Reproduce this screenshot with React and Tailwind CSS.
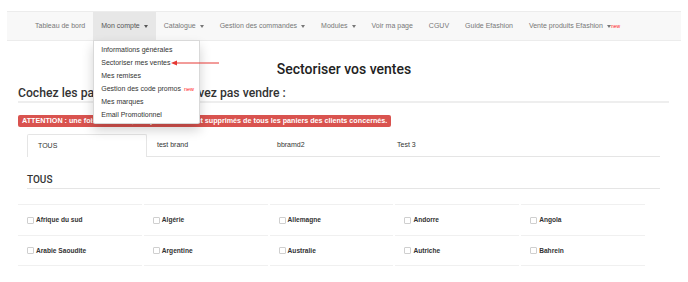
import React from 'react';

const navItems = [
  { label: 'Tableau de bord' },
  { label: 'Mon compte', caret: true, active: true },
  { label: 'Catalogue', caret: true },
  { label: 'Gestion des commandes', caret: true },
  { label: 'Modules', caret: true },
  { label: 'Voir ma page' },
  { label: 'CGUV' },
  { label: 'Guide Efashion' },
  { label: 'Vente produits Efashion', caret: true, isNew: true },
];

const menu = [
  'Informations générales',
  'Sectoriser mes ventes',
  'Mes remises',
  'Gestion des code promos',
  'Mes marques',
  'Email Promotionnel',
];

const tabs = ['TOUS', 'test brand', 'bbramd2', 'Test 3'];

const countries = [
  'Afrique du sud', 'Algérie', 'Allemagne', 'Andorre', 'Angola',
  'Arabie Saoudite', 'Argentine', 'Australie', 'Autriche', 'Bahrein',
];

function Caret() {
  return <span className="inline-block ml-[4px] w-0 h-0 border-x-[2.5px] border-t-[3px] border-x-transparent border-t-current align-middle" />;
}

function Dropdown() {
  return (
    <div className="absolute left-0 top-full z-20 w-[107px] bg-white border border-black/15 rounded-b-[2px] shadow-[0_6px_12px_rgba(0,0,0,0.18)] py-[2px]">
      {menu.map(m => (
        <div key={m} className="px-[7px] h-[13px] leading-[13px] text-[7px] text-[#333] whitespace-nowrap">
          {m}
          {m === 'Gestion des code promos' && <span className="ml-[3px] text-[5.5px] text-[#ff1a1a]">new</span>}
        </div>
      ))}
    </div>
  );
}

export default function App() {
  return (
    <div className="relative w-[688px] h-[282px] overflow-hidden bg-white pt-[11px] font-['Liberation_Sans',Arial,sans-serif]">
      {/* Navbar */}
      <div className="mx-[7px] h-[30px] flex bg-[#f8f8f8] border-y border-[#ececec] pl-[20px]">
        {navItems.map(item => (
          <div
            key={item.label}
            className={`relative flex items-center px-[8px] text-[7px] whitespace-nowrap ${item.active ? 'bg-[#e7e7e7] text-[#555]' : 'text-[#777]'}`}
          >
            {item.label}
            {item.caret && <Caret />}
            {item.isNew && <span className="text-[5px] text-[#ff1a1a] leading-none">new</span>}
            {item.active && <Dropdown />}
          </div>
        ))}
      </div>

      {/* Arrow annotation */}
      <svg className="absolute left-[170px] top-[59px] z-30" width="50" height="8" viewBox="0 0 50 8">
        <line x1="6" y1="4" x2="49" y2="4" stroke="#e53935" strokeWidth="1" />
        <polygon points="1,4 7,1.5 7,6.5" fill="#e53935" />
      </svg>

      <h1 className="mt-[20px] text-center text-[14px] leading-[16px] font-medium text-[#222] font-['Roboto',sans-serif]">
        Sectoriser vos ventes
      </h1>

      <div className="mx-[18px] mr-[19px]">
        <h2 className="mt-[9px] pb-[1px] text-[12.2px] leading-[14px] font-medium text-[#333] border-b-2 border-[#eee] font-['Roboto',sans-serif]">
          Cochez les pays que vous ne pouvez pas vendre :
        </h2>
        <div className="mt-[12px] flex items-center w-fit h-[12px] px-[4px] rounded-[2px] bg-[#d9534f] text-white text-[7.2px] font-bold whitespace-nowrap">
          ATTENTION : une fois décochés, vos produits seront supprimés de tous les paniers des clients concernés.
        </div>
      </div>

      {/* Tabs */}
      <div className="mt-[7px] ml-[27px] mr-[28px] flex h-[23px] border-b border-[#e5e5e5]">
        {tabs.map((t, i) => (
          <div
            key={t}
            className={`w-[120px] pl-[10px] flex items-center text-[7px] text-[#333] ${i === 0 ? 'bg-white border border-b-0 border-[#e5e5e5] rounded-t-[2px] -mb-px' : ''}`}
          >
            {t}
          </div>
        ))}
      </div>

      <div className="mt-[17px] ml-[27px] mr-[28px] pb-[2px] border-b border-[#e5e5e5] text-[10px] leading-[12px] font-medium text-[#333] font-['Roboto',sans-serif]">
        TOUS
      </div>

      <div className="mt-[15px] ml-[18px] w-[627px] grid grid-cols-5 gap-x-[2px]">
        {countries.map((c, i) => (
          <div key={c} className={`h-[31px] flex items-center pl-[9px] border-t border-[#f0f0f0] ${i >= 5 ? 'border-b' : ''}`}>
            <span className="w-[7px] h-[7px] border border-[#cfcfcf] rounded-[1px] bg-white mr-[2px]" />
            <span className="text-[6.6px] font-bold text-[#333]">{c}</span>
          </div>
        ))}
      </div>
    </div>
  );
}
